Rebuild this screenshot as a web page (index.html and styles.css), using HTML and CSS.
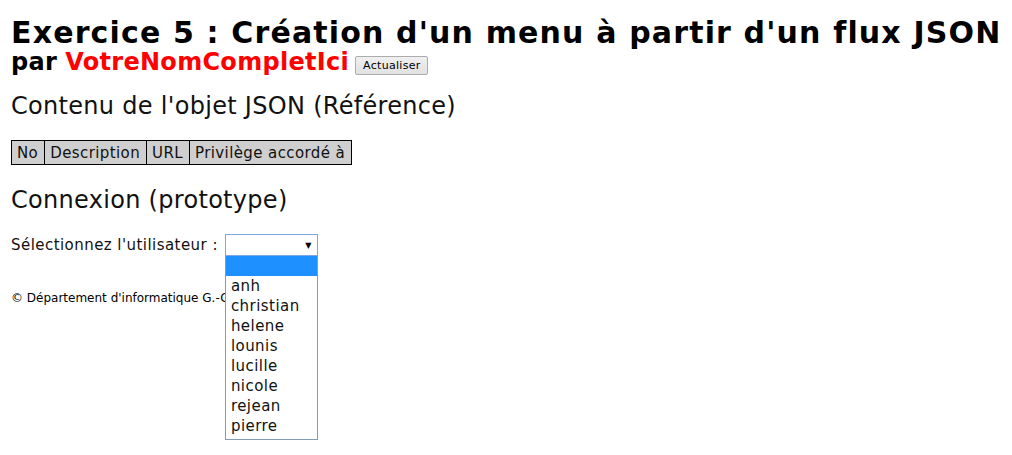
FILE: index.html
```html
<!DOCTYPE html>
<html lang="fr">
<head>
<meta charset="utf-8">
<title>Exercice 5</title>
<link rel="stylesheet" href="styles.css">
</head>
<body>
<header class="head">
  <h1 class="title">Exercice 5 : Création d'un menu à partir d'un flux JSON</h1>
  <div class="subtitle">par <span class="name">VotreNomCompletIci</span> <button class="btn" type="button">Actualiser</button></div>
</header>
<h2 class="section">Contenu de l'objet JSON (Référence)</h2>
<table class="json">
  <tr><th>No</th><th>Description</th><th>URL</th><th>Privilège accordé à</th></tr>
</table>
<h2 class="section section2">Connexion (prototype)</h2>
<div class="login">
  <span class="label">Sélectionnez l'utilisateur :</span>
  <div class="selectwrap">
    <div class="select"><span class="arrow">▼</span></div>
    <ul class="options">
      <li class="opt active">&nbsp;</li>
      <li class="opt">anh</li>
      <li class="opt">christian</li>
      <li class="opt">helene</li>
      <li class="opt">lounis</li>
      <li class="opt">lucille</li>
      <li class="opt">nicole</li>
      <li class="opt">rejean</li>
      <li class="opt">pierre</li>
    </ul>
  </div>
</div>
<footer class="foot"><span class="foottext">© Département d'informatique G.-Garneau</span></footer>
</body>
</html>
```
FILE: styles.css
```css
html, body { margin: 0; padding: 0; background: #fff; }
body {
  font-family: "DejaVu Sans", Verdana, sans-serif;
  color: #000;
  padding: 16px 10px 0 11px;
  min-height: 440px;
}
.head { margin: 0; }
.title {
  margin: 0;
  font-size: 30px;
  line-height: 34px;
  font-weight: bold;
  letter-spacing: 1.15px;
  white-space: nowrap;
}
.subtitle {
  font-size: 24px;
  line-height: 25px;
  font-weight: bold;
  letter-spacing: 0.3px;
  display: flex;
  align-items: center;
}
.name { color: #ff0000; margin-left: 8px; margin-right: 6px; }
.btn {
  font-family: "DejaVu Sans", Verdana, sans-serif;
  font-size: 11px;
  letter-spacing: 0.3px;
  line-height: 15px;
  padding: 1px 6px 1px 7px;
  border: 1px solid #acacac;
  border-radius: 2px;
  background: linear-gradient(#f0f0f0, #e1e1e1);
  color: #000;
  margin-top: 5px;
}
.section {
  margin: 17px 0 0 0;
  font-size: 24px;
  letter-spacing: 0.3px;
  line-height: 28px;
  font-weight: normal;
  color: #111;
}
.json {
  border-collapse: collapse;
  margin-top: 20px;
}
.json th {
  background: #cfcfcf;
  border: 1px solid #000;
  font-weight: normal;
  font-size: 15px;
  letter-spacing: 0.4px;
  line-height: 18px;
  padding: 3px 6px 2px 5px;
  text-align: left;
  color: #111;
}
.section2 { margin-top: 21px; }
.login {
  display: flex;
  align-items: center;
  margin-top: 20px;
  font-size: 15px;
  letter-spacing: 0.45px;
  color: #111;
}
.label { margin-right: 7px; }
.selectwrap { position: relative; }
.select {
  width: 91px;
  height: 20px;
  border: 1px solid #7ea6e0;
  background: #fff;
  display: flex;
  justify-content: flex-end;
  align-items: center;
}
.arrow { font-size: 8px; margin-right: 5px; color: #000; }
.options {
  position: absolute;
  left: 0;
  top: 22px;
  width: 91px;
  margin: 0;
  padding: 0 0 3px 0;
  list-style: none;
  border: 1px solid #7f9db9;
  border-top: none;
  background: #fff;
  z-index: 2;
}
.opt {
  font-size: 15px;
  line-height: 20px;
  height: 20px;
  padding-left: 5px;
  color: #111;
}
.opt.active { background: #1e90ff; }
.foot {
  margin-top: 35px;
  font-size: 12px;
  line-height: 14px;
}
.foottext {
  display: inline-block;
  max-width: 214px;
  overflow: hidden;
  white-space: nowrap;
  vertical-align: top;
}
```
